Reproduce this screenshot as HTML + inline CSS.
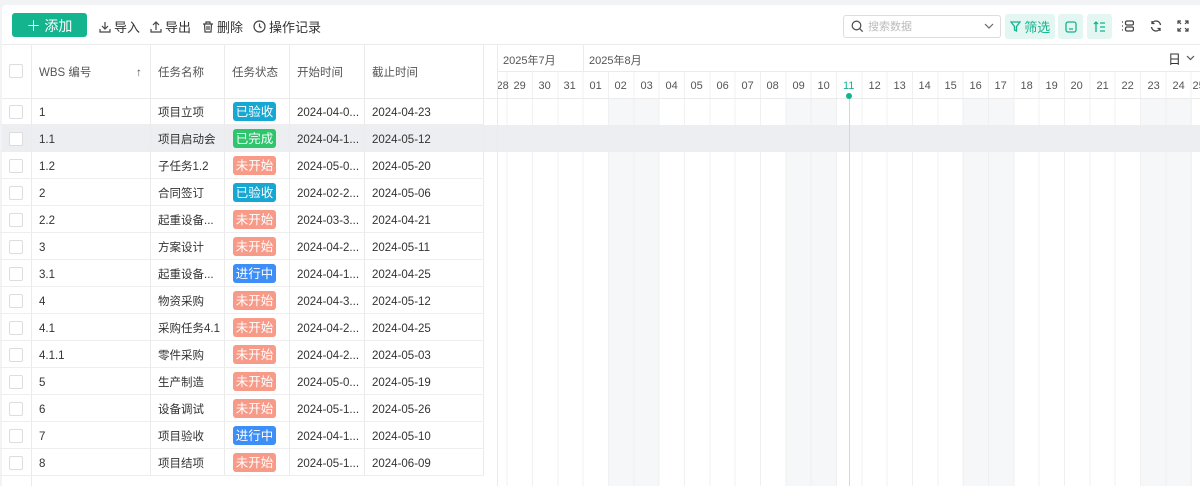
<!DOCTYPE html>
<html><head><meta charset="utf-8"><style>
*{box-sizing:border-box;margin:0;padding:0}
body{width:1200px;height:486px;overflow:hidden;background:#f2f3f5;font-family:"Liberation Sans","Noto Sans CJK SC",sans-serif;font-size:12px;color:#333;position:relative}
.card{position:absolute;left:2px;top:5px;width:1198px;height:481px;background:#fff;border-radius:4px 0 0 0}
.abs{position:absolute}
.tb{position:absolute;top:17px;font-size:13px;color:#333;display:flex;align-items:center;gap:3px}
.add{position:absolute;left:12px;top:13px;width:75px;height:24px;background:#13b48e;border-radius:3px;color:#fff;font-size:14px;display:flex;align-items:center;justify-content:center;padding-top:1px}
.search{position:absolute;left:843px;top:15px;width:158px;height:23px;border:1px solid #ddd;border-radius:3px;color:#bbb;font-size:11px;padding-left:24px;line-height:23px}
.gbtn{position:absolute;top:14px;height:25px;background:#e3f6f1;border-radius:3px;color:#13b48e;display:flex;align-items:center;justify-content:center;font-size:13px}
.hl{position:absolute;background:#ebebeb}
.row{position:absolute;left:0;width:483px;height:27px;border-bottom:1px solid #eee}
.cell{position:absolute;top:0;height:27px;line-height:27px;padding-top:2px;font-size:11.5px;color:#333;white-space:nowrap}
.cb{position:absolute;left:9px;top:7px;width:14px;height:14px;border:1px solid #ddd;border-radius:2px;background:#fff}
.tag{position:absolute;left:233px;top:4px;width:43px;height:19px;border-radius:3px;color:#fff;font-size:12.5px;line-height:19px;padding-top:1px;text-align:center}
.d{position:absolute;top:80px;width:25.33px;text-align:center;font-size:11px;color:#555}
.we{position:absolute;top:98px;height:388px;background:#f5f7f8}
</style></head><body>
<div class="card"></div>
<div class="add">＋ 添加</div>
<div class="tb" style="left:99px"><svg width="12" height="12" viewBox="0 0 12 12" fill="none" stroke="#444" stroke-width="1.2"><path d="M6 1v7M3 5l3 3 3-3M1 8v3h10V8"/></svg>导入</div>
<div class="tb" style="left:150px"><svg width="12" height="12" viewBox="0 0 12 12" fill="none" stroke="#444" stroke-width="1.2"><path d="M6 9V2M3 4l3-3 3 3M1 8v3h10V8"/></svg>导出</div>
<div class="tb" style="left:202px"><svg width="12" height="12" viewBox="0 0 12 12" fill="none" stroke="#444" stroke-width="1.2"><path d="M1 3h10M4 3V1h4v2M2.5 3l.5 8h6l.5-8M5 5v4M7 5v4"/></svg>删除</div>
<div class="tb" style="left:253px"><svg width="13" height="13" viewBox="0 0 13 13" fill="none" stroke="#444" stroke-width="1.2"><circle cx="6.5" cy="6.5" r="5.5"/><path d="M6.5 3.5v3l2 1.5"/></svg>操作记录</div>
<div class="search">搜索数据</div>
<svg class="abs" style="left:851px;top:20px" width="13" height="13" viewBox="0 0 13 13" fill="none" stroke="#555" stroke-width="1.3"><circle cx="5.5" cy="5.5" r="4.3"/><path d="M8.7 8.7l3 3"/></svg>
<svg class="abs" style="left:984px;top:23px" width="10" height="7" viewBox="0 0 10 7" fill="none" stroke="#666" stroke-width="1.2"><path d="M1 1l4 4 4-4"/></svg>
<div class="gbtn" style="left:1005px;width:50px"><svg width="11" height="11" viewBox="0 0 11 11" fill="none" stroke="#13b48e" stroke-width="1.3"><path d="M1 1h9L6.5 5.5V10L4.5 9V5.5z"/></svg>&nbsp;筛选</div>
<div class="gbtn" style="left:1058px;width:25px"><svg width="12" height="12" viewBox="0 0 12 12" fill="none" stroke="#13b48e" stroke-width="1.3"><rect x="1" y="1" width="10" height="10" rx="2"/><path d="M4 8h4"/></svg></div>
<div class="gbtn" style="left:1087px;width:25px"><svg width="13" height="12" viewBox="0 0 13 12" fill="none" stroke="#13b48e" stroke-width="1.3"><path d="M3 11V1M1 3l2-2 2 2M7 2h5M7 6h5M7 10h5"/></svg></div>
<svg class="abs" style="left:1121px;top:20px" width="13" height="12" viewBox="0 0 13 12" fill="none" stroke="#444" stroke-width="1.3"><path d="M1 2h1M1 6h1M1 10h1"/><rect x="4.5" y="1" width="8" height="4" rx="1.5"/><rect x="4.5" y="7" width="8" height="4" rx="1.5"/></svg>
<svg class="abs" style="left:1150px;top:20px" width="12" height="12" viewBox="0 0 12 12" fill="none" stroke="#444" stroke-width="1.3"><path d="M10.5 5A4.5 4.5 0 0 0 2 3.5M1.5 7A4.5 4.5 0 0 0 10 8.5M2 1v2.5h2.5M10 11V8.5H7.5"/></svg>
<svg class="abs" style="left:1177px;top:20px" width="12" height="12" viewBox="0 0 12 12" fill="none" stroke="#444" stroke-width="1.2"><path d="M1 4V1h3M8 1h3v3M11 8v3H8M4 11H1V8M1 1l3 3M11 1L8 4M11 11L8 8M1 11l3-3"/></svg>

<div class="hl" style="left:2px;top:44px;width:1198px;height:1px"></div>
<div class="we" style="left:608px;width:51px"></div>
<div class="we" style="left:786px;width:51px"></div>
<div class="we" style="left:963px;width:51px"></div>
<div class="we" style="left:1141px;width:51px"></div>
<div class="abs" style="left:497px;top:71px;width:703px;height:415px;background:repeating-linear-gradient(90deg,transparent 0px,transparent 9.67px,#f0f0f0 9.67px,#f0f0f0 10.67px,transparent 10.67px,transparent 25.333px)"></div>
<div class="hl" style="left:497px;top:71px;width:703px;height:1px"></div>
<div class="hl" style="left:2px;top:98px;width:1198px;height:1px"></div>
<div class="hl" style="left:583px;top:44px;width:1px;height:27px"></div>
<div class="hl" style="left:1161px;top:44px;width:1px;height:27px"></div>
<div class="abs" style="left:1161px;top:45px;width:39px;height:26px;background:#fff"></div>
<div class="abs" style="left:1168px;top:49px;font-size:13px;color:#333">日</div>
<svg class="abs" style="left:1186px;top:55px" width="9" height="6" viewBox="0 0 9 6" fill="none" stroke="#555" stroke-width="1.2"><path d="M1 1l3.5 3.5L8 1"/></svg>
<div class="abs" style="left:503px;top:52px;font-size:11px;color:#555">2025年7月</div>
<div class="abs" style="left:589px;top:52px;font-size:11px;color:#555">2025年8月</div>
<div class="d" style="left:490px">28</div><div class="d" style="left:507px">29</div><div class="d" style="left:532px">30</div><div class="d" style="left:557px">31</div>
<div class="d" style="left:583px">01</div><div class="d" style="left:608px">02</div><div class="d" style="left:634px">03</div><div class="d" style="left:659px">04</div><div class="d" style="left:684px">05</div><div class="d" style="left:710px">06</div><div class="d" style="left:735px">07</div><div class="d" style="left:760px">08</div><div class="d" style="left:786px">09</div><div class="d" style="left:811px">10</div><div class="d" style="left:836px;color:#13b48e">11</div><div class="d" style="left:862px">12</div><div class="d" style="left:887px">13</div><div class="d" style="left:912px">14</div><div class="d" style="left:938px">15</div><div class="d" style="left:963px">16</div><div class="d" style="left:988px">17</div><div class="d" style="left:1014px">18</div><div class="d" style="left:1039px">19</div><div class="d" style="left:1064px">20</div><div class="d" style="left:1090px">21</div><div class="d" style="left:1115px">22</div><div class="d" style="left:1141px">23</div><div class="d" style="left:1166px">24</div><div class="d" style="left:1186px">25</div>
<div class="abs" style="left:2px;top:125px;width:1198px;height:27px;background:#eceef1"></div>
<div class="abs" style="left:848.5px;top:96px;width:1px;height:390px;background:#b5e8da"></div>
<div class="abs" style="left:846px;top:93px;width:6px;height:6px;border-radius:50%;background:#13b48e"></div>
<div class="hl" style="left:31px;top:44px;width:1px;height:442px"></div>
<div class="hl" style="left:150px;top:44px;width:1px;height:432px"></div>
<div class="hl" style="left:224px;top:44px;width:1px;height:432px"></div>
<div class="hl" style="left:289px;top:44px;width:1px;height:432px"></div>
<div class="hl" style="left:364px;top:44px;width:1px;height:432px"></div>
<div class="hl" style="left:483px;top:44px;width:1px;height:432px"></div>
<div class="hl" style="left:497px;top:44px;width:1px;height:442px"></div>
<div class="cb" style="top:64px"></div>
<div class="cell" style="left:39px;top:58px;color:#555">WBS 编号</div>
<div class="cell" style="left:136px;top:58px;color:#555">↑</div>
<div class="cell" style="left:158px;top:58px;color:#555">任务名称</div>
<div class="cell" style="left:232px;top:58px;color:#555">任务状态</div>
<div class="cell" style="left:297px;top:58px;color:#555">开始时间</div>
<div class="cell" style="left:372px;top:58px;color:#555">截止时间</div>

<div class="row" style="top:98px"><div class="cb"></div><div class="cell" style="left:39px">1</div><div class="cell" style="left:158px">项目立项</div><div class="tag" style="background:#17a7d3">已验收</div><div class="cell" style="left:297px">2024-04-0...</div><div class="cell" style="left:372px">2024-04-23</div></div>
<div class="row" style="top:125px"><div class="cb"></div><div class="cell" style="left:39px">1.1</div><div class="cell" style="left:158px">项目启动会</div><div class="tag" style="background:#2ec56c">已完成</div><div class="cell" style="left:297px">2024-04-1...</div><div class="cell" style="left:372px">2024-05-12</div></div>
<div class="row" style="top:152px"><div class="cb"></div><div class="cell" style="left:39px">1.2</div><div class="cell" style="left:158px">子任务1.2</div><div class="tag" style="background:#f89a88">未开始</div><div class="cell" style="left:297px">2024-05-0...</div><div class="cell" style="left:372px">2024-05-20</div></div>
<div class="row" style="top:179px"><div class="cb"></div><div class="cell" style="left:39px">2</div><div class="cell" style="left:158px">合同签订</div><div class="tag" style="background:#17a7d3">已验收</div><div class="cell" style="left:297px">2024-02-2...</div><div class="cell" style="left:372px">2024-05-06</div></div>
<div class="row" style="top:206px"><div class="cb"></div><div class="cell" style="left:39px">2.2</div><div class="cell" style="left:158px">起重设备...</div><div class="tag" style="background:#f89a88">未开始</div><div class="cell" style="left:297px">2024-03-3...</div><div class="cell" style="left:372px">2024-04-21</div></div>
<div class="row" style="top:233px"><div class="cb"></div><div class="cell" style="left:39px">3</div><div class="cell" style="left:158px">方案设计</div><div class="tag" style="background:#f89a88">未开始</div><div class="cell" style="left:297px">2024-04-2...</div><div class="cell" style="left:372px">2024-05-11</div></div>
<div class="row" style="top:260px"><div class="cb"></div><div class="cell" style="left:39px">3.1</div><div class="cell" style="left:158px">起重设备...</div><div class="tag" style="background:#3d8ef6">进行中</div><div class="cell" style="left:297px">2024-04-1...</div><div class="cell" style="left:372px">2024-04-25</div></div>
<div class="row" style="top:287px"><div class="cb"></div><div class="cell" style="left:39px">4</div><div class="cell" style="left:158px">物资采购</div><div class="tag" style="background:#f89a88">未开始</div><div class="cell" style="left:297px">2024-04-3...</div><div class="cell" style="left:372px">2024-05-12</div></div>
<div class="row" style="top:314px"><div class="cb"></div><div class="cell" style="left:39px">4.1</div><div class="cell" style="left:158px">采购任务4.1</div><div class="tag" style="background:#f89a88">未开始</div><div class="cell" style="left:297px">2024-04-2...</div><div class="cell" style="left:372px">2024-04-25</div></div>
<div class="row" style="top:341px"><div class="cb"></div><div class="cell" style="left:39px">4.1.1</div><div class="cell" style="left:158px">零件采购</div><div class="tag" style="background:#f89a88">未开始</div><div class="cell" style="left:297px">2024-04-2...</div><div class="cell" style="left:372px">2024-05-03</div></div>
<div class="row" style="top:368px"><div class="cb"></div><div class="cell" style="left:39px">5</div><div class="cell" style="left:158px">生产制造</div><div class="tag" style="background:#f89a88">未开始</div><div class="cell" style="left:297px">2024-05-0...</div><div class="cell" style="left:372px">2024-05-19</div></div>
<div class="row" style="top:395px"><div class="cb"></div><div class="cell" style="left:39px">6</div><div class="cell" style="left:158px">设备调试</div><div class="tag" style="background:#f89a88">未开始</div><div class="cell" style="left:297px">2024-05-1...</div><div class="cell" style="left:372px">2024-05-26</div></div>
<div class="row" style="top:422px"><div class="cb"></div><div class="cell" style="left:39px">7</div><div class="cell" style="left:158px">项目验收</div><div class="tag" style="background:#3d8ef6">进行中</div><div class="cell" style="left:297px">2024-04-1...</div><div class="cell" style="left:372px">2024-05-10</div></div>
<div class="row" style="top:449px"><div class="cb"></div><div class="cell" style="left:39px">8</div><div class="cell" style="left:158px">项目结项</div><div class="tag" style="background:#f89a88">未开始</div><div class="cell" style="left:297px">2024-05-1...</div><div class="cell" style="left:372px">2024-06-09</div></div>
</body></html>
